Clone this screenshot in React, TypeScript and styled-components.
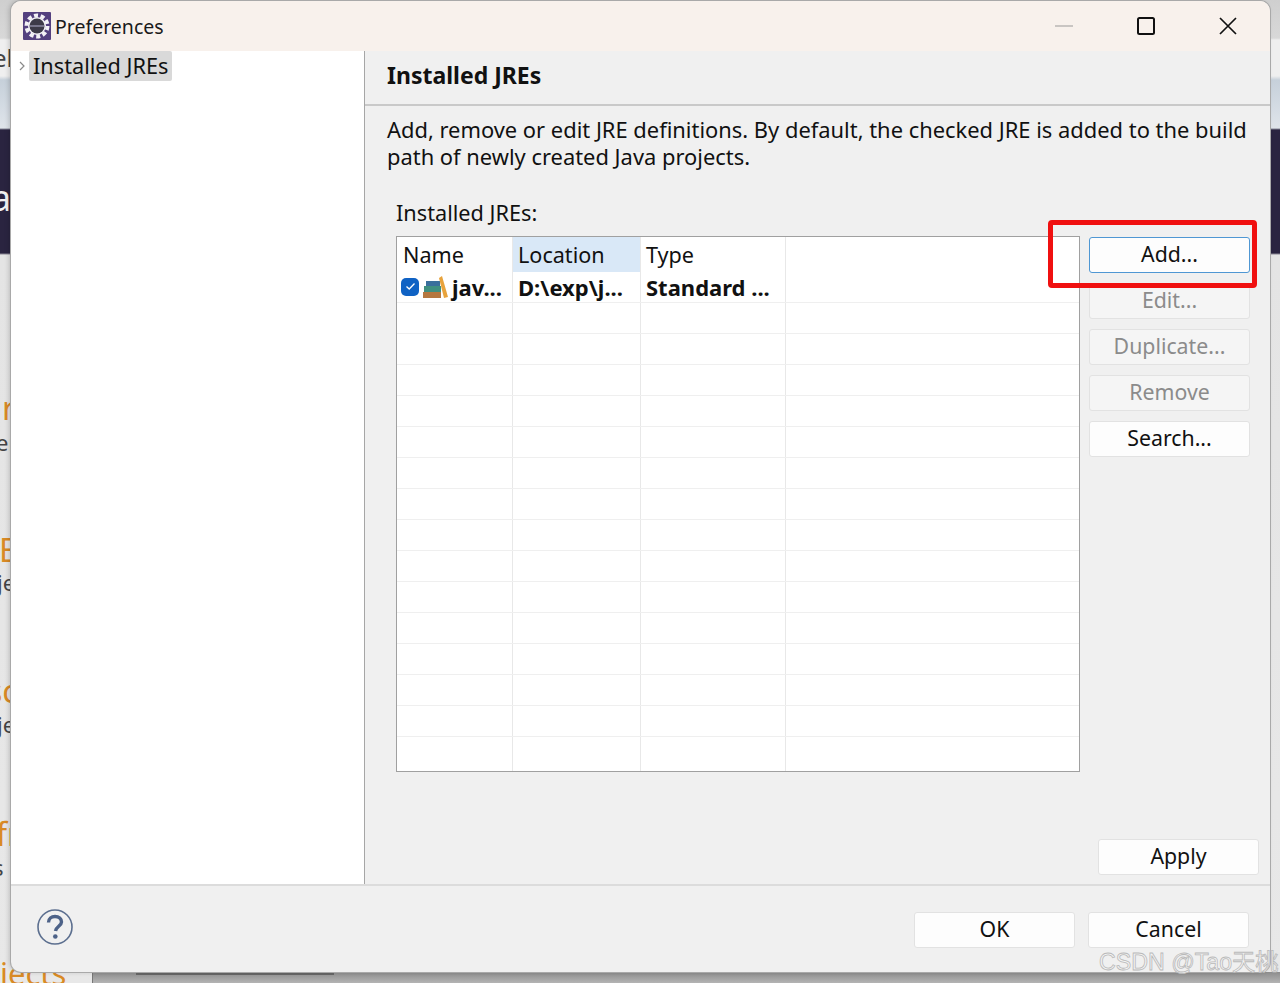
import React from "react";
import styled, { createGlobalStyle } from "styled-components";

const GlobalStyle = createGlobalStyle`
  html, body {
    margin: 0;
    padding: 0;
    background: #e4e4e4;
  }
  * {
    box-sizing: border-box;
  }
`;

const Stage = styled.div`
  position: relative;
  width: 1280px;
  height: 983px;
  overflow: hidden;
  padding: 1px 10px 11px 11px;
  font-family: "Noto Sans", "Liberation Sans", sans-serif;
  color: #111;
  background: linear-gradient(
    180deg,
    #cfcfcf 0,
    #d8d8d8 38px,
    #efefef 40px,
    #efefef 76px,
    #c6d0da 80px,
    #dfe4ea 128px,
    #2a2440 130px,
    #2a2440 253px,
    #e4e4e4 255px,
    #e8e8e8 100%
  );
`;

/* bits of the window behind the dialog */
const Peek = styled.span<{ $x: number; $y: number; $color: string; $size?: number }>`
  position: absolute;
  left: ${(p) => p.$x}px;
  top: ${(p) => p.$y}px;
  font-size: ${(p) => p.$size ?? 32}px;
  line-height: 1;
  color: ${(p) => p.$color};
`;

const BottomStrip = styled.div`
  position: absolute;
  left: 92px;
  right: 0;
  top: 972px;
  height: 11px;
  background: linear-gradient(180deg, #8c8c8c, #b4b4b4);
  border-left: 1px solid #777;
`;

const ScrollThumb = styled.div`
  position: absolute;
  left: 43px;
  top: 0;
  width: 198px;
  height: 3px;
  background: #666;
`;

const Window = styled.div`
  position: relative;
  display: flex;
  flex-direction: column;
  height: 971px;
  border-radius: 10px;
  background: #f0f0f0;
  overflow: hidden;
  box-shadow: 0 0 0 1px #a9a9a9, -2px 0 5px rgba(0, 0, 0, 0.18);
`;

const TitleBar = styled.div`
  display: flex;
  align-items: center;
  height: 50px;
  flex-shrink: 0;
  padding: 0 1px 0 12px;
  background: #f8f1ec;
`;

const AppIcon = styled.svg`
  width: 28px;
  height: 28px;
  margin-right: 4px;
`;

const TitleText = styled.span`
  flex: 1;
  font-size: 19.5px;
  color: #1a1a1a;
`;

const WindowButton = styled.div`
  display: flex;
  align-items: center;
  justify-content: center;
  width: 82px;
  height: 50px;
`;

const Main = styled.div`
  display: flex;
  height: 833px;
  flex-shrink: 0;
`;

const Sidebar = styled.div`
  width: 354px;
  flex-shrink: 0;
  background: #fff;
  border-right: 1px solid #a6a6a6;
`;

const TreeRow = styled.div`
  display: flex;
  align-items: center;
  gap: 4px;
  padding-left: 8px;
`;

const TreeLabel = styled.span`
  padding: 0 4px;
  height: 30px;
  line-height: 29px;
  font-size: 21.7px;
  background: #d9d9d9;
  border-radius: 2px;
`;

const Content = styled.div`
  flex: 1;
  display: flex;
  flex-direction: column;
  min-width: 0;
`;

const Header = styled.div`
  height: 55px;
  flex-shrink: 0;
  padding: 9px 0 0 22px;
  font-size: 23px;
  font-weight: 700;
  line-height: 30px;
  border-bottom: 2px solid #c9c9c9;
`;

const Description = styled.p`
  margin: 10px 0 0;
  padding: 0 12px 0 22px;
  font-size: 21.9px;
  line-height: 27px;
`;

const SectionLabel = styled.div`
  margin: 28px 0 0 31px;
  font-size: 21.7px;
  line-height: 30px;
`;

const TableArea = styled.div`
  display: flex;
  gap: 9px;
  margin: 8px 0 0 31px;
`;

const Table = styled.div`
  display: flex;
  flex-direction: column;
  width: 684px;
  height: 536px;
  background: #fff;
  border: 1px solid #a0a0a0;
`;

const Row = styled.div<{ $head?: boolean; $last?: boolean }>`
  display: grid;
  grid-template-columns: 116px 128px 145px 1fr;
  flex: ${(p) => (p.$last ? "1" : "none")};
  height: ${(p) => (p.$head ? "35px" : p.$last ? "auto" : "31px")};
  font-weight: ${(p) => (p.$head ? 400 : 700)};
  font-size: ${(p) => (p.$head ? "21.6px" : "22px")};
  border-bottom: ${(p) => (p.$head || p.$last ? "none" : "1px solid #efefef")};
`;

const Cell = styled.div<{ $active?: boolean; $plain?: boolean; $inset?: boolean }>`
  display: flex;
  align-items: center;
  gap: 3px;
  padding-left: ${(p) => (p.$inset ? "6px" : "5px")};
  padding-bottom: 1px;
  white-space: nowrap;
  overflow: hidden;
  background: ${(p) => (p.$active ? "#d9e8f7" : "transparent")};
  border-right: ${(p) => (p.$plain ? "none" : "1px solid #e8e8e8")};
`;

const Checkbox = styled.span`
  display: flex;
  align-items: center;
  justify-content: center;
  flex-shrink: 0;
  width: 18px;
  height: 18px;
  margin-left: -1px;
  border-radius: 5px;
  background: #0f62c4;
`;

const ButtonColumn = styled.div`
  display: flex;
  flex-direction: column;
  gap: 10px;
  width: 162px;
  padding-top: 1px;
`;

const PushButton = styled.div<{ $disabled?: boolean; $focus?: boolean }>`
  display: flex;
  align-items: center;
  justify-content: center;
  width: 161px;
  height: 36px;
  flex-shrink: 0;
  padding-bottom: 4px;
  font-size: 21.3px;
  border-radius: 3px;
  color: ${(p) => (p.$disabled ? "#8b8b8b" : "#111")};
  background: ${(p) => (p.$disabled ? "#f5f5f5" : "#fdfdfd")};
  border: 1px solid ${(p) => (p.$focus ? "#4f97d3" : "#e2e2e2")};
`;

const ApplyRow = styled.div`
  display: flex;
  justify-content: flex-end;
  margin-top: auto;
  padding: 0 11px 9px 0;
`;

const Footer = styled.div`
  flex: 1;
  display: flex;
  align-items: center;
  padding: 2px 21px 0 26px;
  border-top: 2px solid #dcdcdc;
`;

const HelpIcon = styled.svg`
  width: 36px;
  height: 36px;
  margin-right: auto;
  margin-bottom: 6px;
`;

const FooterButtons = styled.div`
  display: flex;
  gap: 13px;
`;

const Highlight = styled.div`
  position: absolute;
  left: 1048px;
  top: 220px;
  width: 209px;
  height: 68px;
  border: 5px solid #f01010;
  border-radius: 4px;
`;

const Watermark = styled.div`
  position: absolute;
  left: 1099px;
  top: 946px;
  font-family: "Liberation Sans", "Noto Sans CJK SC", sans-serif;
  font-size: 23.2px;
  line-height: 32px;
  white-space: nowrap;
  color: #f4f4f4;
  -webkit-text-stroke: 0.8px #b9b9b9;
`;

const rows = Array.from({ length: 15 }, (_, i) => i);

const App = () => {
  return (
    <Stage>
      <GlobalStyle />
      <Peek $x={-7} $y={46} $color="#444" $size={24}>el</Peek>
      <Peek $x={-9} $y={180} $color="#f2f2f2" $size={36}>a</Peek>
      <Peek $x={2} $y={392} $color="#d98a25">r</Peek>
      <Peek $x={-4} $y={431} $color="#444" $size={22}>er</Peek>
      <Peek $x={-1} $y={534} $color="#d98a25">E</Peek>
      <Peek $x={-3} $y={571} $color="#444" $size={22}>je</Peek>
      <Peek $x={-13} $y={675} $color="#d98a25">sc</Peek>
      <Peek $x={-3} $y={713} $color="#444" $size={22}>je</Peek>
      <Peek $x={-4} $y={818} $color="#d98a25">fr</Peek>
      <Peek $x={-7} $y={856} $color="#444" $size={22}>s</Peek>
      <Peek $x={0} $y={958} $color="#d98a25" $size={31}>jects</Peek>
      <BottomStrip>
        <ScrollThumb />
      </BottomStrip>

      <Window>
        <TitleBar>
          <AppIcon viewBox="0 0 28 28">
            <rect width="28" height="28" rx="1" fill="#54407f" />
            <circle cx="14" cy="14" r="10.5" fill="none" stroke="#f3f1f6" strokeWidth="4" strokeDasharray="4 2.6" />
            <circle cx="14" cy="14" r="9" fill="#f3f1f6" />
            <circle cx="14" cy="14" r="7.5" fill="#3d3a48" />
            <rect x="7" y="13" width="14" height="2" fill="#77748a" />
          </AppIcon>
          <TitleText>Preferences</TitleText>
          <WindowButton>
            <svg width="18" height="2" viewBox="0 0 18 2">
              <rect width="18" height="2" fill="#c9c5c2" />
            </svg>
          </WindowButton>
          <WindowButton>
            <svg width="18" height="18" viewBox="0 0 18 18">
              <rect x="1" y="1" width="16" height="16" rx="1.5" fill="none" stroke="#111" strokeWidth="2" />
            </svg>
          </WindowButton>
          <WindowButton>
            <svg width="18" height="18" viewBox="0 0 18 18">
              <path d="M1 1 17 17M17 1 1 17" stroke="#111" strokeWidth="1.7" />
            </svg>
          </WindowButton>
        </TitleBar>

        <Main>
          <Sidebar>
            <TreeRow>
              <svg width="6" height="10" viewBox="0 0 6 10">
                <path d="M1 1 5 5 1 9" fill="none" stroke="#8a8a8a" strokeWidth="1.2" />
              </svg>
              <TreeLabel>Installed JREs</TreeLabel>
            </TreeRow>
          </Sidebar>

          <Content>
            <Header>Installed JREs</Header>
            <Description>
              Add, remove or edit JRE definitions. By default, the checked JRE is added to the build path of newly
              created Java projects.
            </Description>
            <SectionLabel>Installed JREs:</SectionLabel>
            <TableArea>
              <Table>
                <Row $head>
                  <Cell $inset>Name</Cell>
                  <Cell $active>Location</Cell>
                  <Cell>Type</Cell>
                  <Cell $plain />
                </Row>
                <Row>
                  <Cell>
                    <Checkbox>
                      <svg width="11" height="9" viewBox="0 0 11 9">
                        <path d="M1.5 4.5 4.2 7 9.5 1.5" fill="none" stroke="#fff" strokeWidth="1.3" />
                      </svg>
                    </Checkbox>
                    <svg width="27" height="24" viewBox="0 0 27 24">
                      <rect x="1" y="17" width="18" height="6" fill="#b5773f" />
                      <rect x="2" y="11" width="17" height="6" fill="#3f8f80" />
                      <rect x="4" y="6" width="14" height="5" fill="#3a6f9c" />
                      <path d="M17 3 20 1 26 22 22 23Z" fill="#e8a33c" />
                    </svg>
                    jav...
                  </Cell>
                  <Cell>D:\exp\j...</Cell>
                  <Cell>Standard ...</Cell>
                  <Cell $plain />
                </Row>
                {rows.map((r) => (
                  <Row key={r} $last={r === 14}>
                    <Cell />
                    <Cell />
                    <Cell />
                    <Cell $plain />
                  </Row>
                ))}
              </Table>
              <ButtonColumn>
                <PushButton $focus>Add...</PushButton>
                <PushButton $disabled>Edit...</PushButton>
                <PushButton $disabled>Duplicate...</PushButton>
                <PushButton $disabled>Remove</PushButton>
                <PushButton>Search...</PushButton>
              </ButtonColumn>
            </TableArea>
            <ApplyRow>
              <PushButton>Apply</PushButton>
            </ApplyRow>
          </Content>
        </Main>

        <Footer>
          <HelpIcon viewBox="0 0 36 36">
            <circle cx="18" cy="18" r="17" fill="none" stroke="#5c6f8f" strokeWidth="1.6" />
            <path
              d="M11.5 13.5C11.5 9.5 14.5 7.5 18 7.5 22 7.5 24.5 10 24.5 13 24.5 17 19 17.5 18.5 22"
              fill="none"
              stroke="#4d6288"
              strokeWidth="3.4"
            />
            <circle cx="18.3" cy="27.5" r="2.3" fill="#4d6288" />
          </HelpIcon>
          <FooterButtons>
            <PushButton>OK</PushButton>
            <PushButton>Cancel</PushButton>
          </FooterButtons>
        </Footer>
      </Window>

      <Highlight />
      <Watermark>CSDN @Tao天桃</Watermark>
    </Stage>
  );
};

export default App;
